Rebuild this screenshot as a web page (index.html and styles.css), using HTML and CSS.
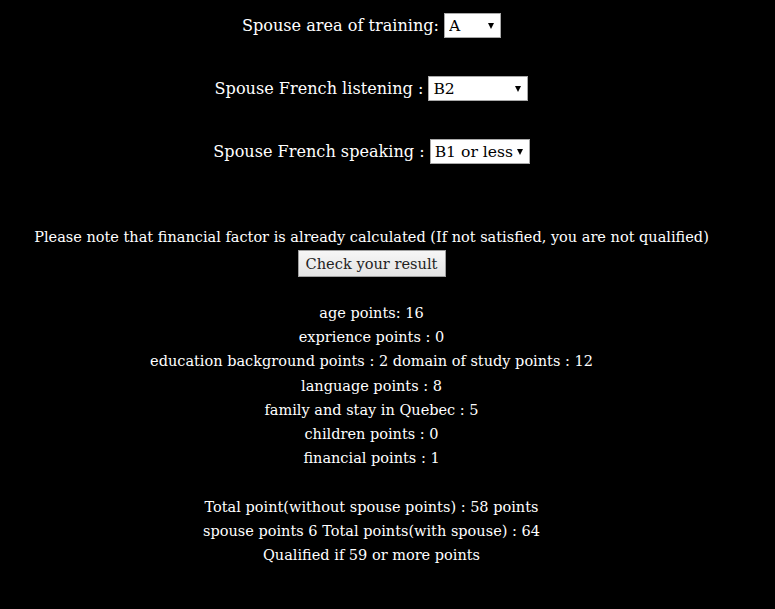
FILE: index.html
```html
<!DOCTYPE html>
<html lang="en">
<head>
<meta charset="utf-8">
<title>Quebec points calculator</title>
<link rel="stylesheet" href="styles.css">
</head>
<body>
<main class="page">
  <div class="fields">
    <div class="field">
      <label class="field-label" for="f1">Spouse area of training:</label>
      <span class="select select-a"><select id="f1"><option>A</option></select></span>
    </div>
    <div class="field">
      <label class="field-label" for="f2">Spouse French listening :</label>
      <span class="select select-b"><select id="f2"><option>B2</option></select></span>
    </div>
    <div class="field">
      <label class="field-label" for="f3">Spouse French speaking :</label>
      <span class="select select-b"><select id="f3"><option>B1 or less</option></select></span>
    </div>
  </div>
  <p class="note">Please note that financial factor is already calculated (If not satisfied, you are not qualified)</p>
  <button class="check" type="button">Check your result</button>
  <div class="results">
    <div class="line">age points: 16</div>
    <div class="line">exprience points : 0</div>
    <div class="line">education background points : 2 domain of study points : 12</div>
    <div class="line">language points : 8</div>
    <div class="line">family and stay in Quebec : 5</div>
    <div class="line">children points : 0</div>
    <div class="line">financial points : 1</div>
  </div>
  <div class="totals">
    <div class="line">Total point(without spouse points) : 58 points</div>
    <div class="line">spouse points 6 Total points(with spouse) : 64</div>
    <div class="line">Qualified if 59 or more points</div>
  </div>
</main>
</body>
</html>
```
FILE: styles.css
```css
html, body {
  margin: 0;
  padding: 0;
  background: #000;
}
body {
  color: #fff;
  font-family: "DejaVu Serif", "Liberation Serif", serif;
  font-size: 14.5px;
}
.page {
  width: 743px;
  text-align: center;
  padding-top: 13px;
}
.fields {
  display: flex;
  flex-direction: column;
  gap: 38px;
}
.field {
  height: 25px;
  display: flex;
  justify-content: center;
  align-items: center;
  gap: 5px;
}
.field-label {
  font-size: 16.1px;
  line-height: 25px;
}
.select {
  position: relative;
  display: inline-block;
  height: 25px;
}
.select select {
  appearance: none;
  -webkit-appearance: none;
  height: 25px;
  margin: 0;
  padding: 0 0 0 4px;
  border: 1px solid #a9a9a9;
  border-radius: 0;
  background: #fff;
  color: #000;
  font-family: "DejaVu Serif", serif;
  font-size: 15.6px;
  box-sizing: border-box;
  text-align: left;
}
.select-a select { width: 57px; }
.select-b select { width: 100px; }
.select::after {
  content: "";
  position: absolute;
  right: 7px;
  top: 10px;
  border-left: 3px solid transparent;
  border-right: 3px solid transparent;
  border-top: 6px solid #000;
  pointer-events: none;
}
.note {
  margin: 61px 0 1px;
  line-height: 24px;
}
.check {
  display: block;
  margin: 0 auto;
  height: 27px;
  width: 148px;
  padding: 0;
  border: 1px solid #a0a0a0;
  border-radius: 0;
  background: linear-gradient(#f6f6f6, #e4e4e4);
  color: #222;
  font-family: "DejaVu Serif", serif;
  font-size: 14.6px;
}
.results {
  margin-top: 24px;
}
.line {
  line-height: 24.2px;
}
.totals {
  margin-top: 24.6px;
}
```
